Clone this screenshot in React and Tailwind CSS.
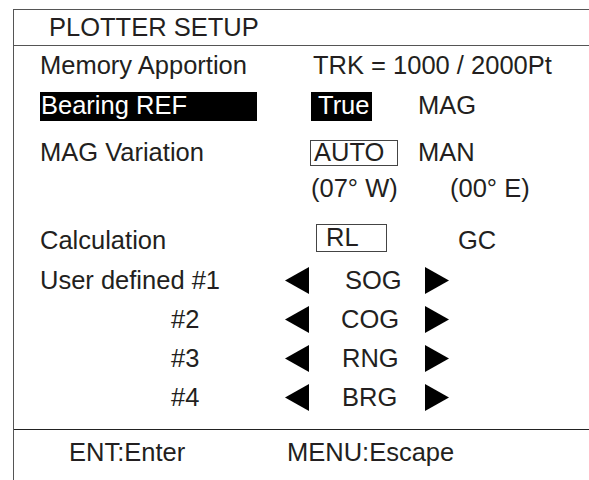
import React from 'react';

const LeftTri = () => (
  <svg width="24" height="27" viewBox="0 0 24 27" className="shrink-0">
    <path d="M0 13.5 L24 0 L24 27 Z" fill="#000" />
  </svg>
);

const RightTri = () => (
  <svg width="24" height="27" viewBox="0 0 24 27" className="shrink-0">
    <path d="M0 0 L24 13.5 L0 27 Z" fill="#000" />
  </svg>
);

const userRows = [
  { label: 'User defined #1', pad: 'pl-0', value: 'SOG', vpad: 'pl-[36px]' },
  { label: '#2', pad: 'pl-[131px]', value: 'COG', vpad: 'pl-[32px]' },
  { label: '#3', pad: 'pl-[131px]', value: 'RNG', vpad: 'pl-[33px]' },
  { label: '#4', pad: 'pl-[131px]', value: 'BRG', vpad: 'pl-[33px]' },
];

export default function App() {
  return (
    <div
      className="w-[589px] h-[480px] bg-white pt-[9px] pl-[13px] overflow-hidden text-[#231f20] text-[25.5px] leading-none"
      style={{ fontFamily: '"Liberation Sans", Arial, sans-serif' }}
    >
      <div className="h-full border-l border-t border-[#555] flex flex-col">
        {/* title */}
        <div className="h-[36px] shrink-0 border-b border-[#555] flex items-center pl-[35px]">
          PLOTTER SETUP
        </div>

        <div className="pl-[26px] flex flex-col">
          <div className="h-[40px] flex items-center">
            <div className="w-[273px]">Memory Apportion</div>
            <div>TRK = 1000 / 2000Pt</div>
          </div>

          <div className="h-[40px] flex items-center">
            <div className="w-[217px] h-[29px] bg-black text-white flex items-center pl-px">Bearing REF</div>
            <div className="w-[54px]" />
            <div className="w-[61px] h-[29px] bg-black text-white flex items-center pl-[7px]">True</div>
            <div className="pl-[46px]">MAG</div>
          </div>

          <div className="h-[40px] mt-[7px] flex items-center">
            <div className="w-[270px]">MAG Variation</div>
            <div className="w-[88px] h-[26px] border border-[#444] flex items-center pl-[3px]">AUTO</div>
            <div className="pl-[20px]">MAN</div>
          </div>

          <div className="h-[32px] flex items-center">
            <div className="w-[271px]" />
            <div className="w-[139px]">(07° W)</div>
            <div>(00° E)</div>
          </div>

          <div className="h-[40px] mt-[16px] flex items-center">
            <div className="w-[276px]">Calculation</div>
            <div className="w-[71px] h-[28px] border border-[#444] flex items-center pl-[9px] -mt-[6px]">RL</div>
            <div className="pl-[71px]">GC</div>
          </div>

          {userRows.map((r) => (
            <div key={r.label} className="h-[39px] flex items-center">
              <div className={`w-[245px] ${r.pad}`}>{r.label}</div>
              <LeftTri />
              <div className={`w-[116px] ${r.vpad}`}>{r.value}</div>
              <RightTri />
            </div>
          ))}
        </div>

        {/* footer */}
        <div className="mt-auto mb-[5px] h-[46px] border-t border-[#222] flex items-center">
          <div className="w-[273px] pl-[55px]">ENT:Enter</div>
          <div>MENU:Escape</div>
        </div>
      </div>
    </div>
  );
}
